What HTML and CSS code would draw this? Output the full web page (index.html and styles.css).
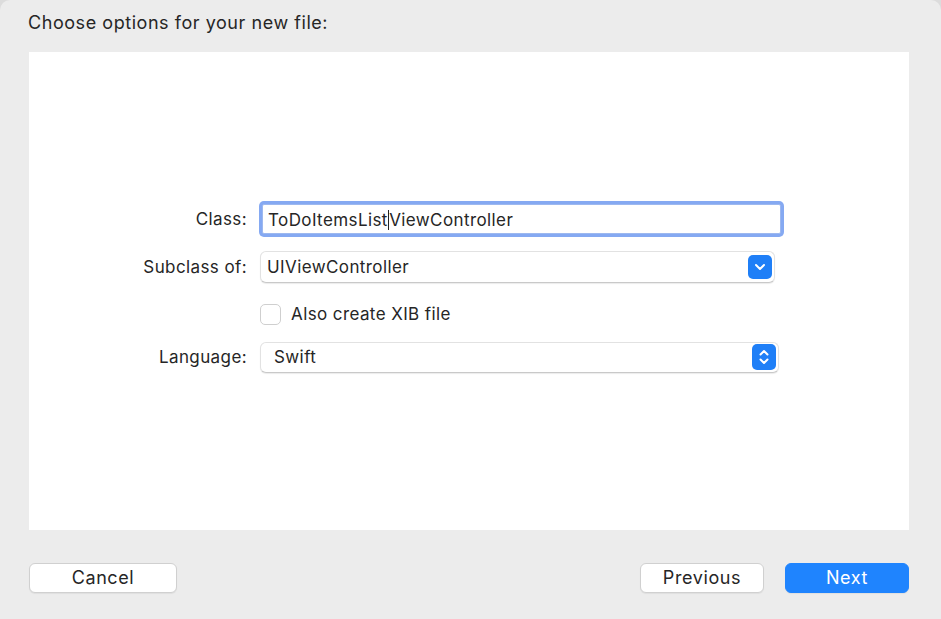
FILE: index.html
```html
<!DOCTYPE html>
<html>
<head>
<meta charset="utf-8">
<link rel="stylesheet" href="styles.css">
</head>
<body>
<div class="window">
  <div class="title">Choose options for your new file:</div>
  <div class="panel">
    <div class="form">
      <div class="row row-class">
        <div class="label">Class:</div>
        <div class="textfield"><span>ToDoItemsList</span><span class="caret"></span><span>ViewController</span></div>
      </div>
      <div class="row row-sub">
        <div class="label">Subclass of:</div>
        <div class="popup popup-sub">
          <span class="popup-text">UIViewController</span>
          <span class="popbtn popbtn-sub">
            <svg width="12" height="8" viewBox="0 0 12 8"><path d="M2 2 L6 6 L10 2" fill="none" stroke="#fff" stroke-width="2" stroke-linecap="round" stroke-linejoin="round"/></svg>
          </span>
        </div>
      </div>
      <div class="row row-check">
        <div class="label"></div>
        <label class="check"><span class="box"></span><span>Also create XIB file</span></label>
      </div>
      <div class="row row-lang">
        <div class="label">Language:</div>
        <div class="popup popup-lang">
          <span class="popup-text">Swift</span>
          <span class="popbtn popbtn-lang">
            <svg width="12" height="18" viewBox="0 0 12 18"><path d="M2.5 6.5 L6 3 L9.5 6.5 M2.5 11.5 L6 15 L9.5 11.5" fill="none" stroke="#fff" stroke-width="2" stroke-linecap="round" stroke-linejoin="round"/></svg>
          </span>
        </div>
      </div>
    </div>
  </div>
  <div class="footer">
    <button class="btn btn-cancel">Cancel</button>
    <div class="spacer"></div>
    <button class="btn btn-prev">Previous</button>
    <button class="btn btn-next">Next</button>
  </div>
</div>
</body>
</html>
```

FILE: styles.css
```css
html, body {
  margin: 0;
  padding: 0;
  background: #dcdcdc;
}
body {
  width: 941px;
  height: 619px;
  overflow: hidden;
  font-family: Inter, "Noto Sans", "Liberation Sans", sans-serif;
  color: #262626;
}
.window {
  width: 941px;
  height: 619px;
  background: #ececec;
  border-radius: 10px 10px 0 0;
  display: flex;
  flex-direction: column;
  box-sizing: border-box;
}
.title {
  height: 52px;
  box-sizing: border-box;
  padding: 11px 0 0 28px;
  font-size: 18px;
  line-height: 24px;
  letter-spacing: 0.55px;
}
.panel {
  margin: 0 32px 0 29px;
  height: 478px;
  background: #ffffff;
  box-sizing: border-box;
  padding-top: 149px;
}
.form {
  display: flex;
  flex-direction: column;
}
.row {
  display: flex;
  align-items: center;
  font-size: 17px;
  letter-spacing: 0.4px;
}
.label {
  width: 218px;
  text-align: right;
  margin-right: 13px;
  flex: none;
}
.row-class { height: 36px; }
.row-sub { height: 32px; margin-top: 14px; }
.row-check { height: 32px; margin-top: 15px; }
.row-lang { height: 32px; margin-top: 11px; }

.textfield {
  margin-left: 2px;
  width: 519px;
  height: 30px;
  box-sizing: border-box;
  border: 1px solid #9db8ef;
  box-shadow: 0 0 0 3px #85a9f2;
  border-radius: 2px;
  padding: 2px 0 0 5px;
  display: flex;
  align-items: center;
  background: #fff;
}
.caret {
  display: inline-block;
  width: 1px;
  height: 20px;
  background: #222;
  margin-right: 0.4px;
}
.popup {
  position: relative;
  height: 32px;
  box-sizing: border-box;
  border: 1px solid #e2e2e2;
  border-bottom-color: #c9c9c9;
  border-radius: 6px;
  background: #fff;
  box-shadow: 0 1px 1px rgba(0,0,0,0.08);
  display: flex;
  align-items: center;
  padding-left: 6px;
}
.popup-sub { width: 515px; }
.popup-lang { width: 519px; height: 31px; padding-left: 13px; }
.popup-text { flex: 1; }
.popbtn {
  background: #1f7ff7;
  border-radius: 5px;
  display: flex;
  align-items: center;
  justify-content: center;
  margin-right: 2px;
}
.popbtn-sub { width: 24px; height: 24px; }
.popbtn-lang { width: 24px; height: 26px; }
.check {
  display: flex;
  align-items: center;
}
.box {
  width: 21px;
  height: 21px;
  box-sizing: border-box;
  border: 1px solid #cfcfcf;
  border-radius: 5px;
  background: #fff;
  margin-right: 10px;
}
.footer {
  display: flex;
  align-items: center;
  padding: 33px 32px 0 29px;
}
.spacer { flex: 1; }
.btn {
  height: 30px;
  box-sizing: border-box;
  border: 1px solid #d0d0d0;
  border-radius: 6px;
  background: #fff;
  font-family: Inter, "Noto Sans", "Liberation Sans", sans-serif;
  font-size: 18px;
  letter-spacing: 0.6px;
  color: #262626;
  padding: 0 0 2px 0;
  box-shadow: 0 1px 1px rgba(0,0,0,0.06);
}
.btn-cancel { width: 148px; }
.btn-prev { width: 124px; margin-right: 21px; }
.btn-next {
  width: 124px;
  background: #1f84fe;
  border-color: #1f84fe;
  color: #fff;
}
```
